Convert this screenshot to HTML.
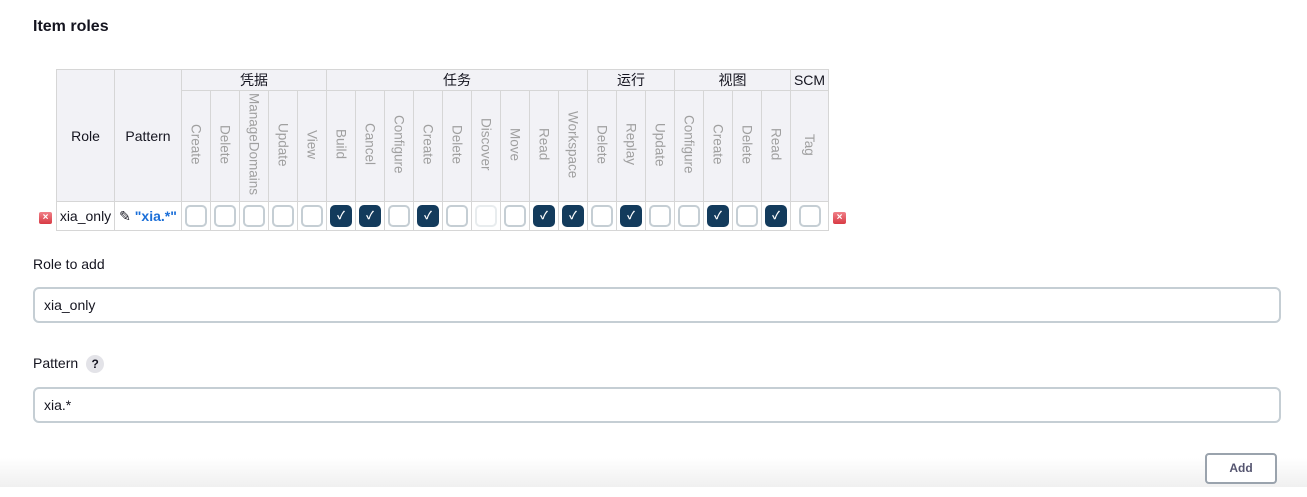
<!DOCTYPE html>
<html><head><meta charset="utf-8"><style>
body{margin:0;width:1307px;height:497px;background:#fff;font-family:"Liberation Sans","Noto Sans CJK SC",sans-serif;color:#14141f;position:relative;overflow:hidden}
h2{position:absolute;left:33px;top:18px;margin:0;font-size:16px;font-weight:bold}
table{position:absolute;left:56px;top:69px;border-collapse:collapse;font-size:13px}
td,th{border:1px solid #d6d6d6;padding:0;text-align:center}
th{background:#f2f2f6;font-weight:normal}
.g{height:21px}
.v{height:110px;width:28px;vertical-align:middle}
.v span{writing-mode:vertical-rl;color:#a0a0a0;font-size:13.5px;font-weight:300;display:inline-block}
.d td{height:28px}
.cb{display:inline-block;width:18px;height:18px;border:2px solid #c5ced4;border-radius:5px;vertical-align:middle;background:#fff;position:relative}
.cb.on{background:#133b5c;border-color:#133b5c;color:#fff;font-size:11px;line-height:18px;font-style:normal;font-weight:bold}
.cb.dis{border-color:#e8ecee}
.x{position:absolute;width:13px;height:12px;background:linear-gradient(#f08088,#d83a44);border-radius:2px;color:#fff;font-size:10px;line-height:12px;text-align:center;font-weight:bold}
.lab{position:absolute;left:33px;font-size:14px}
.in{position:absolute;left:33px;height:32px;border:2px solid #c5ced4;border-radius:6px;font-size:14px;line-height:32px;padding-left:9px;box-sizing:content-box;width:1235px}
.q{display:inline-block;width:18px;height:18px;border-radius:50%;background:#e3e3e8;text-align:center;font-size:12px;line-height:18px;font-weight:bold;margin-left:8px}
.bar{position:absolute;left:0;top:458px;width:1307px;height:29px;background:linear-gradient(#fff,#f0f0f0)}
.btn{position:absolute;left:1205px;top:453px;width:68px;height:27px;border:2px solid #9aa3ad;border-radius:4px;background:#fff;text-align:center;line-height:27px;font-size:12px;font-weight:bold;color:#555570}
</style></head><body>
<h2>Item roles</h2>
<div class="x" style="left:39px;top:212px">×</div>
<table>
<tr class="g"><th rowspan="2" style="width:57px;font-size:14px">Role</th><th rowspan="2" style="width:66px;font-size:14px">Pattern</th><th colspan="5" style="font-size:14px">凭据</th><th colspan="9" style="font-size:14px">任务</th><th colspan="3" style="font-size:14px">运行</th><th colspan="4" style="font-size:14px">视图</th><th style="font-size:14px;width:37px">SCM</th></tr>
<tr>
<th class="v"><span>Create</span></th><th class="v"><span>Delete</span></th><th class="v"><span>ManageDomains</span></th><th class="v"><span>Update</span></th><th class="v"><span>View</span></th>
<th class="v"><span>Build</span></th><th class="v"><span>Cancel</span></th><th class="v"><span>Configure</span></th><th class="v"><span>Create</span></th><th class="v"><span>Delete</span></th><th class="v"><span>Discover</span></th><th class="v"><span>Move</span></th><th class="v"><span>Read</span></th><th class="v"><span>Workspace</span></th>
<th class="v"><span>Delete</span></th><th class="v"><span>Replay</span></th><th class="v"><span>Update</span></th>
<th class="v"><span>Configure</span></th><th class="v"><span>Create</span></th><th class="v"><span>Delete</span></th><th class="v"><span>Read</span></th>
<th class="v" style="width:37px"><span>Tag</span></th></tr>
<tr class="d"><td style="font-size:14px">xia_only</td><td style="font-size:14px;white-space:nowrap">✎ <b style="color:#1a6ed8">"xia.*"</b></td>
<td><i class="cb"></i></td><td><i class="cb"></i></td><td><i class="cb"></i></td><td><i class="cb"></i></td><td><i class="cb"></i></td>
<td><i class="cb on">✓</i></td><td><i class="cb on">✓</i></td><td><i class="cb"></i></td><td><i class="cb on">✓</i></td><td><i class="cb"></i></td><td><i class="cb dis"></i></td><td><i class="cb"></i></td><td><i class="cb on">✓</i></td><td><i class="cb on">✓</i></td>
<td><i class="cb"></i></td><td><i class="cb on">✓</i></td><td><i class="cb"></i></td>
<td><i class="cb"></i></td><td><i class="cb on">✓</i></td><td><i class="cb"></i></td><td><i class="cb on">✓</i></td>
<td><i class="cb"></i></td></tr>
</table>
<div class="x" style="left:833px;top:212px">×</div>
<div class="lab" style="top:256px">Role to add</div>
<div class="in" style="top:287px">xia_only</div>
<div class="lab" style="top:355px">Pattern<span class="q">?</span></div>
<div class="in" style="top:387px">xia.*</div>
<div class="bar"></div>
<div class="btn">Add</div>
</body></html>
